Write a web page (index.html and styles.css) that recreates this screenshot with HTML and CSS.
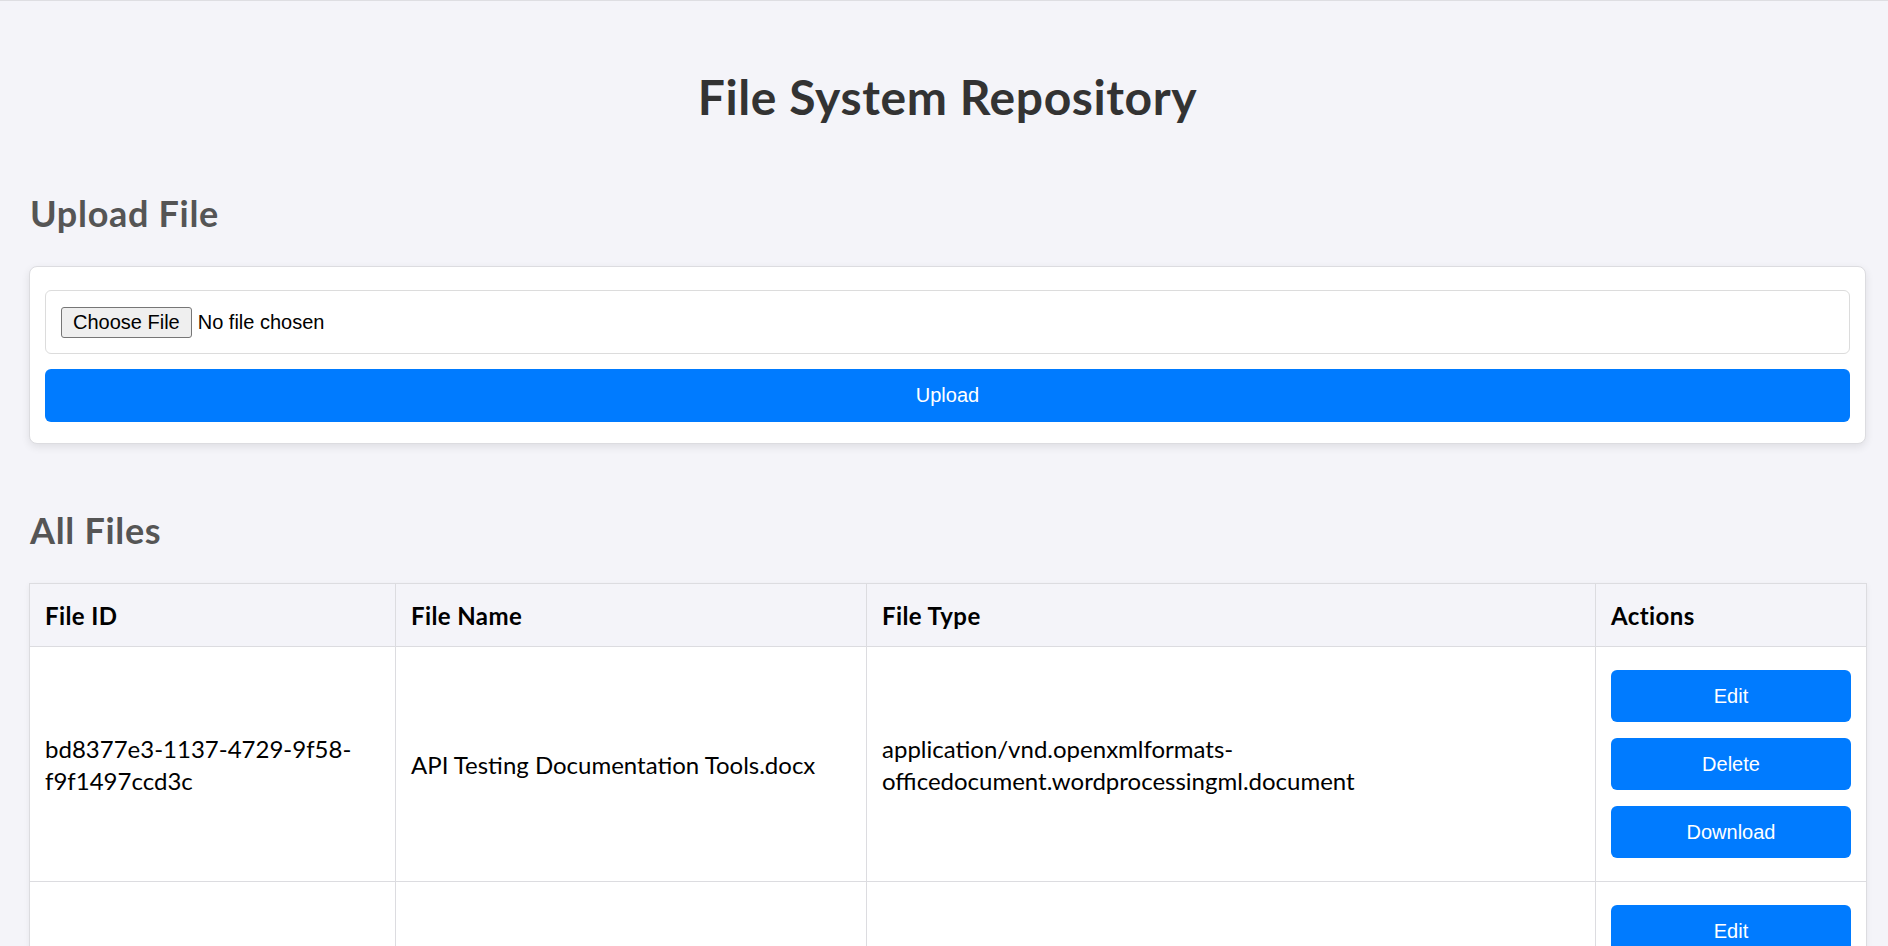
FILE: index.html
```html
<!DOCTYPE html>
<html lang="en">
<head>
<meta charset="utf-8">
<title>File System Repository</title>
<link rel="stylesheet" href="styles.css">
</head>
<body>
<h1 class="page-title">File System Repository</h1>

<h2 class="section-title section-upload">Upload File</h2>
<form class="upload-card">
  <input type="file" class="file-input">
  <button type="submit" class="btn btn-upload">Upload</button>
</form>

<h2 class="section-title section-files">All Files</h2>
<table class="files-table">
  <colgroup>
    <col class="col-id">
    <col class="col-name">
    <col class="col-type">
    <col class="col-actions">
  </colgroup>
  <thead>
    <tr>
      <th>File ID</th>
      <th>File Name</th>
      <th>File Type</th>
      <th>Actions</th>
    </tr>
  </thead>
  <tbody>
    <tr>
      <td>bd8377e3-1137-4729-9f58-f9f1497ccd3c</td>
      <td>API Testing Documentation Tools.docx</td>
      <td>application/vnd.openxmlformats-officedocument.wordprocessingml.document</td>
      <td class="cell-actions">
        <div class="actions">
          <button class="btn">Edit</button>
          <button class="btn">Delete</button>
          <button class="btn">Download</button>
        </div>
      </td>
    </tr>
    <tr>
      <td>4c1e2a90-77d3-4b0e-a6f1-2d9e8b53c710</td>
      <td>Project Requirements.pdf</td>
      <td>application/pdf</td>
      <td class="cell-actions">
        <div class="actions">
          <button class="btn">Edit</button>
          <button class="btn">Delete</button>
          <button class="btn">Download</button>
        </div>
      </td>
    </tr>
  </tbody>
</table>
</body>
</html>
```

FILE: styles.css
```css
html {
  background: #f4f4f9;
}

body {
  margin: 0;
  padding: 0 22px 40px 29px;
  border-top: 1px solid #dedee2;
  background: #f4f4f9;
  font-family: Lato, "Open Sans", sans-serif;
  font-size: 24px;
  color: #111;
}

.page-title {
  margin: 64px 0 0 0;
  font-size: 48px;
  line-height: 64px;
  font-weight: 700;
  letter-spacing: 0.6px;
  color: #333;
  text-align: center;
}

.section-title {
  margin: 0 0 29px 1px;
  padding-top: 1px;
  font-size: 36px;
  line-height: 48px;
  font-weight: 700;
  letter-spacing: 0.7px;
  color: #555;
}

.section-upload {
  margin-top: 59px;
}

.section-files {
  margin-top: 61px;
}

.upload-card {
  display: flex;
  flex-direction: column;
  gap: 15px;
  margin: 0;
  padding: 23px 15px 21px 15px;
  background: #fff;
  border: 1px solid #dcdce0;
  border-radius: 8px;
  box-shadow: 0 3px 8px rgba(0, 0, 0, 0.09);
}

.file-input {
  display: block;
  box-sizing: border-box;
  width: 100%;
  height: 64px;
  padding: 16px 15px 15px 15px;
  border: 1px solid #dcdcdc;
  border-radius: 6px;
  background: #fff;
  font-family: "Liberation Sans", Arial, sans-serif;
  font-size: 20px;
  color: #000;
}

.file-input::file-selector-button {
  box-sizing: border-box;
  height: 31px;
  margin: 0 6px 0 0;
  padding: 0 11px;
  font-family: "Liberation Sans", Arial, sans-serif;
  font-size: 20px;
  color: #000;
  background: #efefef;
  border: 1px solid #767676;
  border-radius: 3px;
}

.btn {
  display: block;
  box-sizing: border-box;
  width: 100%;
  height: 52px;
  margin: 0;
  padding: 0 15px;
  border: none;
  border-radius: 6px;
  background: #007bff;
  color: #fff;
  font-family: "Liberation Sans", Arial, sans-serif;
  font-size: 20px;
  cursor: pointer;
}

.btn-upload {
  height: 53px;
}

.files-table {
  width: 1837px;
  table-layout: fixed;
  border-collapse: collapse;
  background: #fff;
  box-shadow: 0 2px 6px rgba(0, 0, 0, 0.06);
}

.col-id { width: 366px; }
.col-name { width: 471px; }
.col-type { width: 729px; }
.col-actions { width: 271px; }

.files-table th,
.files-table td {
  padding: 16px 15px 14px 15px;
  border: 1px solid #dcdce0;
  text-align: left;
  vertical-align: middle;
  line-height: 32px;
}

.files-table th {
  background: #f4f4f9;
  font-weight: 700;
  letter-spacing: 0.4px;
  color: #000;
}

.files-table td {
  color: #000;
}

.files-table td.cell-actions {
  padding: 15px;
}

.actions {
  display: flex;
  flex-direction: column;
  gap: 16px;
  padding: 8px 0;
}
```
